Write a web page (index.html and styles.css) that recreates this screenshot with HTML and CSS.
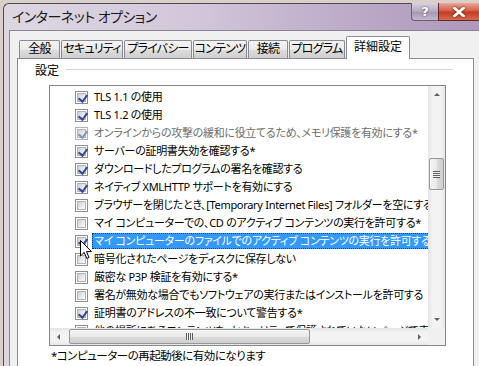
FILE: index.html
```html
<!DOCTYPE html>
<html lang="ja">
<head>
    <meta charset="UTF-8">
    <title>インターネット オプション</title>
    <link rel="stylesheet" href="styles.css">
</head>
<body>
<div class="window">
    <div class="titlebar">
        <div class="title">インターネット オプション</div>
        <div class="caption">
            <span class="btn-help">?</span>
            <span class="btn-close">
                <svg width="12" height="10" viewBox="0 0 12 10"><path d="M1.5 1 L10.5 9 M10.5 1 L1.5 9" stroke="#fff" stroke-width="2.6" stroke-linecap="square"/></svg>
            </span>
        </div>
    </div>
    <div class="client">
        <div class="tabs">
            <span class="tab">全般</span>
            <span class="tab">セキュリティ</span>
            <span class="tab">プライバシー</span>
            <span class="tab">コンテンツ</span>
            <span class="tab">接続</span>
            <span class="tab">プログラム</span>
            <span class="tab current">詳細設定</span>
        </div>
        <div class="panel">
            <div class="group-head">
                <span class="group-label">設定</span>
                <span class="group-line"></span>
            </div>
            <div class="listbox">
                <div class="rows">
                    <div class="row"><span class="cb on"></span><span class="txt">TLS 1.1 の使用</span></div>
                    <div class="row"><span class="cb on"></span><span class="txt">TLS 1.2 の使用</span></div>
                    <div class="row dim"><span class="cb on"></span><span class="txt">オンラインからの攻撃の緩和に役立てるため、メモリ保護を有効にする*</span></div>
                    <div class="row"><span class="cb on"></span><span class="txt">サーバーの証明書失効を確認する*</span></div>
                    <div class="row"><span class="cb on"></span><span class="txt">ダウンロードしたプログラムの署名を確認する</span></div>
                    <div class="row"><span class="cb on"></span><span class="txt">ネイティブ XMLHTTP サポートを有効にする</span></div>
                    <div class="row"><span class="cb"></span><span class="txt">ブラウザーを閉じたとき、[Temporary Internet Files] フォルダーを空にする</span></div>
                    <div class="row"><span class="cb"></span><span class="txt">マイ コンピューターでの、CD のアクティブ コンテンツの実行を許可する*</span></div>
                    <div class="row"><span class="cb on"></span><span class="txt selected">マイ コンピューターのファイルでのアクティブ コンテンツの実行を許可する*</span></div>
                    <div class="row"><span class="cb"></span><span class="txt">暗号化されたページをディスクに保存しない</span></div>
                    <div class="row"><span class="cb"></span><span class="txt">厳密な P3P 検証を有効にする*</span></div>
                    <div class="row"><span class="cb"></span><span class="txt">署名が無効な場合でもソフトウェアの実行またはインストールを許可する</span></div>
                    <div class="row"><span class="cb on"></span><span class="txt">証明書のアドレスの不一致について警告する*</span></div>
                    <div class="row"><span class="cb"></span><span class="txt">他の場所にあるコンテンツを、セキュリティで保護されていないページで表示する</span></div>
                </div>
                <div class="vscroll">
                    <span class="sb-btn"><span class="arr-up"></span></span>
                    <div class="vtrack"><span class="vthumb"><span class="grip-h"></span></span></div>
                    <span class="sb-btn"><span class="arr-down"></span></span>
                </div>
                <div class="hscroll">
                    <span class="sb-btn"><span class="arr-left"></span></span>
                    <div class="htrack"><span class="hthumb"><span class="grip-v"></span></span></div>
                    <span class="sb-btn"><span class="arr-right"></span></span>
                </div>
                <div class="corner"></div>
            </div>
            <div class="note">*コンピューターの再起動後に有効になります</div>
        </div>
    </div>
</div>
<svg class="cursor" width="13" height="20" viewBox="0 0 13 20">
    <path d="M0.5 0.5 L0.5 16 L4.2 12.4 L6.8 18.5 L9 17.5 L6.5 11.6 L11.5 11.6 Z" fill="#fff" stroke="#000" stroke-width="1" stroke-linejoin="miter"/>
</svg>
</body>
</html>
```

FILE: styles.css
```css
* {
    padding: 0;
    margin: 0;
    box-sizing: border-box;
}

body {
    width: 479px;
    height: 366px;
    overflow: hidden;
    position: relative;
    background: #d9d1c9;
    font-family: "Noto Sans", "Noto Sans CJK JP", sans-serif;
    font-size: 11px;
    font-feature-settings: "palt";
    color: #000;
}

.window {
    margin: 3px 0 0 3px;
    height: 363px;
    padding-left: 5px;
    border: 1px solid #4e4858;
    border-right: 0;
    border-bottom: 0;
    border-radius: 6px 0 0 0;
    background: linear-gradient(90deg, #ddd7e2 0%, #d2c7da 40%, #bba9c7 75%, #ae98bd 100%);
    display: flex;
    flex-direction: column;
}

/* タイトルバー */
.titlebar {
    height: 26px;
    display: flex;
    align-items: flex-start;
}

.title {
    padding: 3px 0 0 3px;
    font-size: 14px;
    letter-spacing: -0.5px;
    line-height: 20px;
    color: #1a1a1a;
}

.caption {
    margin-left: auto;
    display: flex;
    margin-top: -1px;
}

.btn-help {
    width: 27px;
    height: 18px;
    border: 1px solid #6a6070;
    border-top: 0;
    border-right: 0;
    border-radius: 0 0 0 4px;
    background: linear-gradient(#d9d2e0, #b4a7c0 50%, #a394b0 51%, #c4b8d0);
    color: #fff;
    font-family: "DejaVu Sans", sans-serif;
    font-weight: bold;
    font-size: 13px;
    line-height: 17px;
    text-align: center;
    text-shadow: 0 0 2px #3d3448;
}

.btn-close {
    width: 41px;
    height: 18px;
    border: 1px solid #5e2a24;
    border-top: 0;
    border-right: 0;
    background: linear-gradient(#e9a898, #d15a45 48%, #c23a22 52%, #d66a50);
    display: flex;
    align-items: center;
    justify-content: center;
}

.btn-close svg {
    filter: drop-shadow(0 0 1px #5a1a10);
}

/* クライアント領域 */
.client {
    flex: 1;
    background: #f0f0f0;
    border-left: 1px solid #8a8494;
    border-top: 1px solid #8a8494;
    padding: 5px 0 0 7px;
    overflow: hidden;
}

.tabs {
    height: 22px;
    padding-left: 2px;
    display: flex;
    align-items: flex-end;
    position: relative;
    z-index: 1;
}

.tab {
    height: 18px;
    border: 1px solid #898c95;
    border-bottom: 0;
    border-radius: 2px 2px 0 0;
    background: linear-gradient(#f3f3f3, #ebebeb 50%, #dddddd 51%, #cfcfcf);
    text-align: center;
    font-size: 12px;
    letter-spacing: -0.8px;
    line-height: 16px;
    white-space: nowrap;
    overflow: hidden;
    margin-right: 1px;
}

.tab:nth-child(1) { width: 41px; }
.tab:nth-child(2) { width: 62px; }
.tab:nth-child(3) { width: 68px; }
.tab:nth-child(4) { width: 54px; }
.tab:nth-child(5) { width: 40px; }
.tab:nth-child(6) { width: 56px; }

.tab.current {
    width: 64px;
    height: 23px;
    margin-bottom: -1px;
    margin-right: 0;
    background: #fff;
    line-height: 20px;
    letter-spacing: 0;
}

.panel {
    margin-right: 5px;
    height: 320px;
    border: 1px solid #898c95;
    background: #fff;
}

.group-head {
    margin-top: 3px;
    height: 16px;
    display: flex;
    align-items: center;
    padding-left: 17px;
    padding-right: 20px;
    font-size: 12px;
}

.group-line {
    flex: 1;
    height: 1px;
    margin-left: 7px;
    margin-top: -2px;
    background: #d0d7dc;
}

/* リストボックス */
.listbox {
    margin: 7px 0 0 31px;
    width: 397px;
    height: 261px;
    border: 1px solid #828790;
    display: grid;
    grid-template-columns: 1fr 17px;
    grid-template-rows: 1fr 17px;
}

.rows {
    padding-top: 2px;
    overflow: hidden;
    white-space: nowrap;
}

.row {
    height: 18px;
    padding-left: 25px;
    display: flex;
    align-items: center;
}

.cb {
    width: 13px;
    height: 13px;
    flex: none;
    border: 1px solid #8e8f8f;
    background: #fff;
    position: relative;
    margin-right: 4px;
}

.cb::before {
    content: "";
    position: absolute;
    left: 1px;
    top: 1px;
    right: 1px;
    bottom: 1px;
    border: 1px solid #aeb4bc;
    background: linear-gradient(135deg, #cbd0d6, #eef0f2 70%, #f8f8f8);
}

.cb.on::after {
    content: "";
    position: absolute;
    left: 4px;
    top: 1px;
    width: 4px;
    height: 7px;
    border-right: 2px solid #34489a;
    border-bottom: 2px solid #34489a;
    transform: rotate(38deg);
}

.txt {
    padding: 0 1px;
    border: 1px dotted transparent;
    line-height: 14px;
    letter-spacing: -0.3px;
}

.txt.selected {
    background: #3399ff;
    color: #fff;
    border-color: #0b3e75;
}

.row.dim .txt {
    color: #6d6d6d;
}

.row.dim .cb {
    border-color: #b4b4b4;
}

.row.dim .cb.on::after {
    border-color: #8592c2;
}

/* スクロールバー */
.vscroll,
.hscroll {
    display: flex;
    background: linear-gradient(90deg, #e4e4e4, #f3f3f3 25%, #f3f3f3 75%, #e6e6e6);
}

.vscroll {
    flex-direction: column;
}

.hscroll {
    background: linear-gradient(#e4e4e4, #f3f3f3 25%, #f3f3f3 75%, #e6e6e6);
}

.sb-btn {
    width: 17px;
    height: 17px;
    flex: none;
    display: flex;
    align-items: center;
    justify-content: center;
}

.arr-up,
.arr-down,
.arr-left,
.arr-right {
    width: 0;
    height: 0;
    border: 3px solid transparent;
}

.arr-up { border-bottom: 3px solid #606060; border-top: 0; }
.arr-down { border-top: 3px solid #606060; border-bottom: 0; }
.arr-left { border-right: 3px solid #606060; border-left: 0; }
.arr-right { border-left: 3px solid #606060; border-right: 0; }

.vtrack {
    flex: 1;
    padding: 55px 1px 0;
}

.vthumb {
    height: 32px;
    display: flex;
    align-items: center;
    justify-content: center;
    border: 1px solid #979797;
    border-radius: 2px;
    background: linear-gradient(90deg, #f4f4f4, #e9e9e9 50%, #dcdcdc 51%, #cfcfcf);
}

.grip-h {
    width: 7px;
    height: 7px;
    background: repeating-linear-gradient(#5c5c5c 0 1px, #f2f2f2 1px 2px);
}

.htrack {
    flex: 1;
    padding: 1px 0 0 2px;
}

.hthumb {
    width: 241px;
    height: 15px;
    display: flex;
    align-items: center;
    justify-content: center;
    border: 1px solid #979797;
    border-radius: 2px;
    background: linear-gradient(#f4f4f4, #e9e9e9 50%, #dcdcdc 51%, #cfcfcf);
}

.grip-v {
    width: 7px;
    height: 7px;
    background: repeating-linear-gradient(90deg, #5c5c5c 0 1px, #f2f2f2 1px 2px);
}

.corner {
    background: #f0f0f0;
}

.note {
    margin: 2px 0 0 33px;
    line-height: 16px;
    font-size: 11.5px;
    letter-spacing: -0.5px;
}

.cursor {
    position: absolute;
    left: 80px;
    top: 240px;
}
```
